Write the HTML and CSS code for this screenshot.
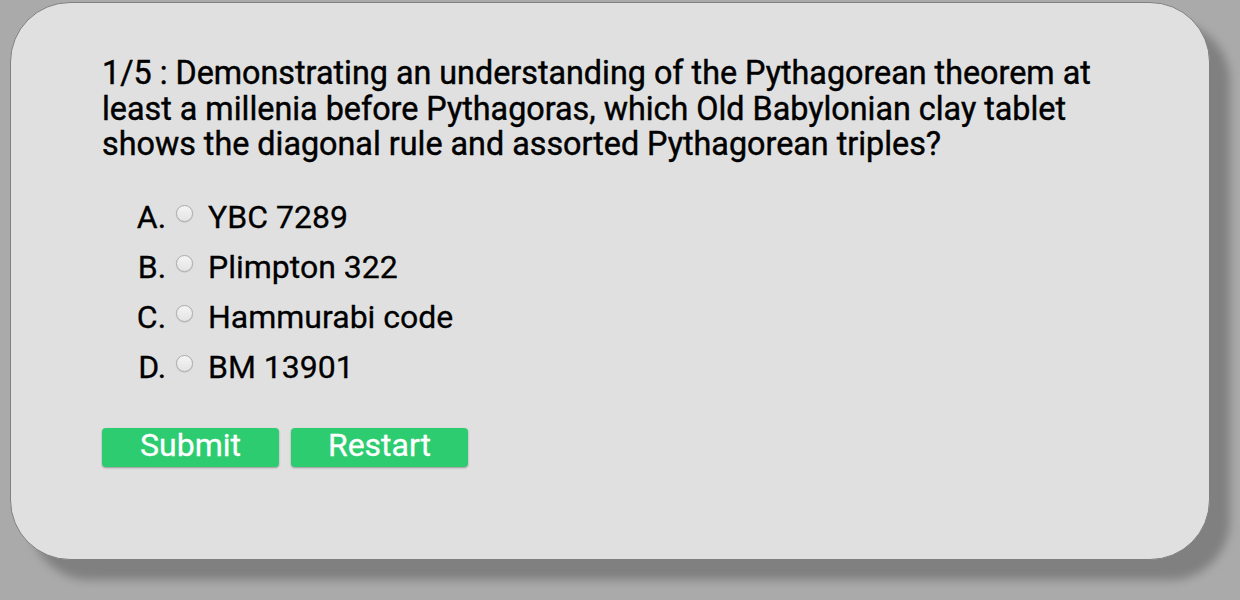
FILE: index.html
```html
<!DOCTYPE html>
<html>
<head>
<meta charset="utf-8">
<link rel="stylesheet" href="styles.css">
</head>
<body>
<div class="card">
  <p class="question">1/5 : Demonstrating an understanding of the Pythagorean theorem at least a millenia before Pythagoras, which Old Babylonian clay tablet shows the diagonal rule and assorted Pythagorean triples?</p>
  <ol class="options">
    <li><input type="radio" name="q"><span>YBC 7289</span></li>
    <li><input type="radio" name="q"><span>Plimpton 322</span></li>
    <li><input type="radio" name="q"><span>Hammurabi code</span></li>
    <li><input type="radio" name="q"><span>BM 13901</span></li>
  </ol>
  <div class="actions">
    <button class="btn">Submit</button>
    <button class="btn">Restart</button>
  </div>
</div>
</body>
</html>
```

FILE: styles.css
```css
html, body {
  margin: 0;
  padding: 0;
}
body {
  background: #aaaaaa;
  font-family: Roboto, "Liberation Sans", sans-serif;
  width: 1240px;
  height: 600px;
  overflow: hidden;
}
.card {
  margin: 2px 0 0 10px;
  width: 1200px;
  height: 558px;
  box-sizing: border-box;
  background: #e0e0e0;
  border: 1px solid #808080;
  border-radius: 60px;
  box-shadow: 20px 20px 10px #808080;
  padding: 53px 91px 0 91px;
}
.question {
  margin: 0;
  font-size: 32.3px;
  line-height: 35.5px;
  font-weight: 400;
  color: #000;
  -webkit-text-stroke: 0.45px #000;
}
.options {
  list-style: upper-alpha;
  margin: 29px 0 0 0;
  padding: 0 0 0 72px;
  font-size: 32px;
  -webkit-text-stroke: 0.3px #000;
}
.options li {
  height: 50px;
  line-height: 50px;
}
.options input {
  appearance: none;
  -webkit-appearance: none;
  width: 17px;
  height: 17px;
  margin: 0 0 0 2px;
  vertical-align: 6px;
  border: 1.5px solid #adadad;
  border-radius: 50%;
  background: linear-gradient(#f4f4f4, #e4e4e4);
  box-shadow: 0 0.5px 1px rgba(0,0,0,0.2);
  box-sizing: border-box;
}
.options span {
  margin-left: 15px;
}
.actions {
  display: flex;
  gap: 12px;
  margin-top: 36px;
}
.btn {
  width: 177px;
  height: 39px;
  border: none;
  border-radius: 4px;
  background: #2ecc71;
  color: #fff;
  font-family: Roboto, "Liberation Sans", sans-serif;
  font-size: 32px;
  line-height: 34px;
  padding: 0 0 6px 0;
  box-shadow: 0 1px 2px #999;
  -webkit-text-stroke: 0.3px #fff;
}
```
